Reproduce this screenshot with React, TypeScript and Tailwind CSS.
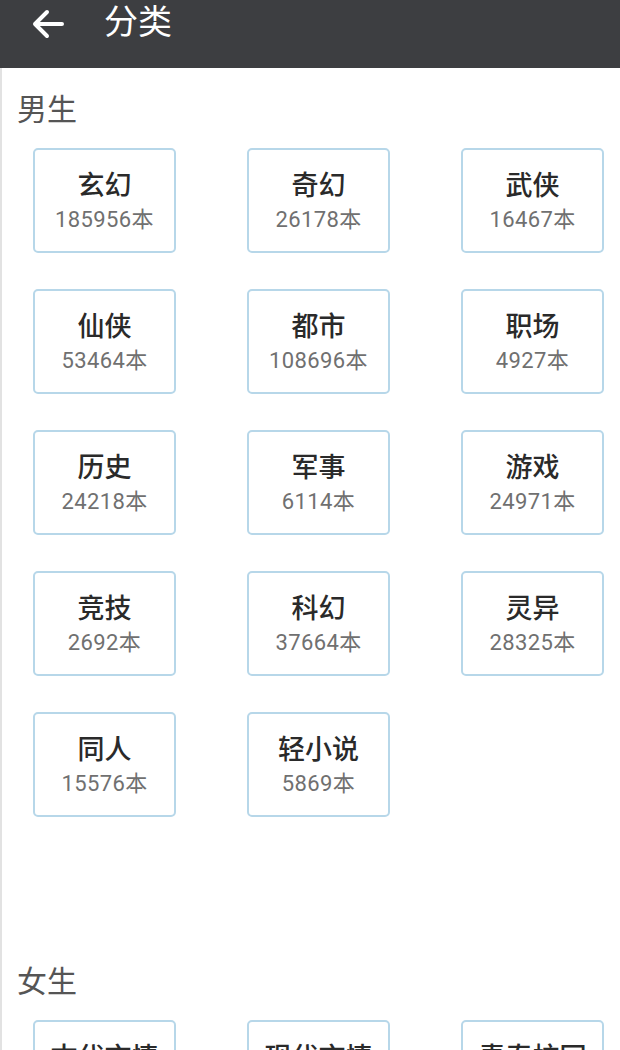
import { ReactNode } from "react";

type Category = { name: string; count: number };

const male: Category[] = [
  { name: "玄幻", count: 185956 },
  { name: "奇幻", count: 26178 },
  { name: "武侠", count: 16467 },
  { name: "仙侠", count: 53464 },
  { name: "都市", count: 108696 },
  { name: "职场", count: 4927 },
  { name: "历史", count: 24218 },
  { name: "军事", count: 6114 },
  { name: "游戏", count: 24971 },
  { name: "竞技", count: 2692 },
  { name: "科幻", count: 37664 },
  { name: "灵异", count: 28325 },
  { name: "同人", count: 15576 },
  { name: "轻小说", count: 5869 },
];

const female: Category[] = [
  { name: "古代言情", count: 312845 },
  { name: "现代言情", count: 406127 },
  { name: "青春校园", count: 51203 },
];

const font = { fontFamily: '"Roboto", "Noto Sans CJK SC", sans-serif' };

const Section = ({ title, children }: { title: string; children: ReactNode }) => (
  <section>
    <h2 className="pl-[15px] text-[30px] leading-[36px] text-[#555]">{title}</h2>
    <div className="mt-[20px] grid grid-cols-[143px_143px_143px] gap-x-[71px] gap-y-[36px] pl-[31px]">
      {children}
    </div>
  </section>
);

const Card = ({ item }: { item: Category }) => (
  <div className="flex h-[105px] flex-col items-center rounded-[5px] border-2 border-[#b7d7e9] bg-white pt-[20px]">
    <span className="text-[27px] font-medium leading-[32px] text-[#2a2a2a]">{item.name}</span>
    <span className="mt-[5px] text-[22px] leading-[26px] tracking-[0.4px] text-[#707070]">
      {item.count}本
    </span>
  </div>
);

const App = () => {
  return (
    <div className="h-[1050px] overflow-hidden bg-white" style={font}>
      {/* Toolbar */}
      <header className="flex h-[68px] items-start bg-[#3d3e41] pt-[2px]">
        <button className="ml-[30px] mt-[6px] flex h-[32px] w-[36px] items-center justify-center">
          <svg width="34" height="30" viewBox="0 0 34 30" fill="none">
            <path
              d="M31 15H4M16 3L4 15L16 27"
              stroke="white"
              strokeWidth="4"
              strokeLinecap="round"
              strokeLinejoin="round"
            />
          </svg>
        </button>
        <h1 className="ml-[38px] text-[34px] leading-[40px] text-white">分类</h1>
      </header>

      {/* Content */}
      <main className="h-full border-l-2 border-[#e2e2e2] pt-[24px]">
        <Section title="男生">
          {male.map((item) => (
            <Card key={item.name} item={item} />
          ))}
        </Section>
        <div className="h-[147px]" />
        <Section title="女生">
          {female.map((item) => (
            <Card key={item.name} item={item} />
          ))}
        </Section>
      </main>
    </div>
  );
};

export default App;
